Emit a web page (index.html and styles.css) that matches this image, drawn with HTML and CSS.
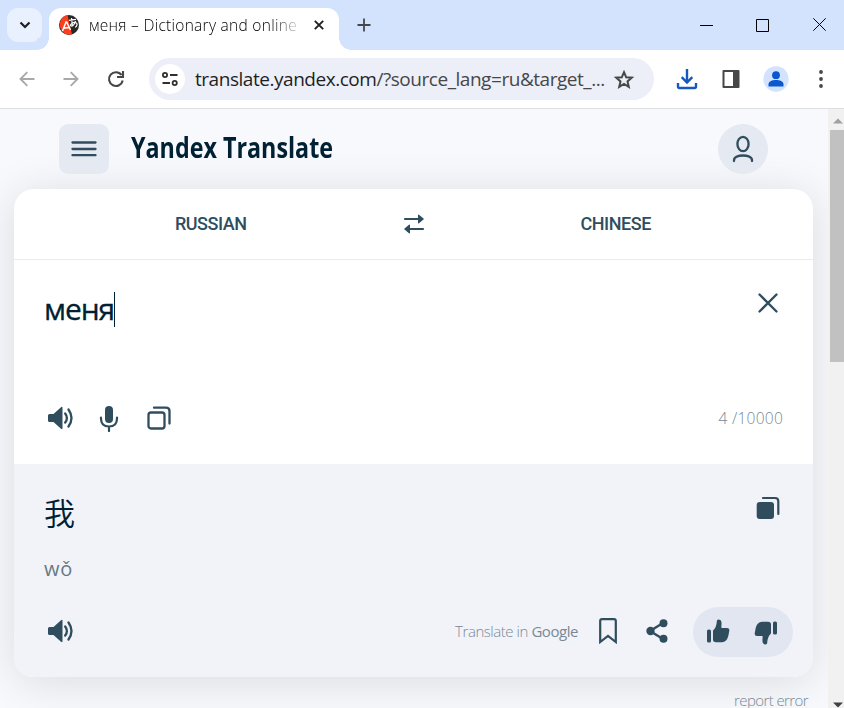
FILE: index.html
```html
<!DOCTYPE html>
<html lang="en">
<head>
<meta charset="utf-8">
<title>меня – Dictionary and online translation</title>
<link rel="stylesheet" href="styles.css">
</head>
<body>
<svg class="defs" width="0" height="0">
  <symbol id="speaker" viewBox="0 0 28 24">
    <path d="M2.500 8h4L14 1.200q1.500-1 1.500 .6v20.400q0 1.600-1.500 .6L6.500 16h-4Q1 16 1 14.500v-5Q1 8 2.500 8z" fill="currentColor"/>
    <path d="M18.200 7.500q3.400 4.500 0 9M21.500 3.500q6 8.500 0 17" fill="none" stroke="currentColor" stroke-width="2.300" stroke-linecap="round"/>
  </symbol>
</svg>
<div class="window">
  <header class="tabstrip">
    <button class="tab-search"><svg width="12" height="8" viewBox="0 0 12 8"><path d="M1.500 1.500 6 6l4.500-4.500" fill="none" stroke="#1f1f1f" stroke-width="2.200"/></svg></button>
    <div class="tab">
      <svg class="favicon" width="20" height="20" viewBox="0 0 20 20"><circle cx="10" cy="10" r="10" fill="#282828"/><path d="M8.500 0A10 10 0 1 0 13 19.500z" fill="#fc3f1d"/><path d="M3.500 16 7 7h.6l3.900 8M4.500 13.200l5.500-.7" fill="none" stroke="#fff" stroke-width="1.500"/><path d="M10 5.300l7-1M12.500 3l1 8.500M16.500 6c-.5 3-3 5.500-4.500 5s1-4 4-3.500 2.500 4 0 4.800" fill="none" stroke="#fff" stroke-width="1.200"/></svg>
      <span class="tab-title">меня – Dictionary and online</span>
      <svg width="10" height="10" viewBox="0 0 10 10"><path d="M.8.800l8.400 8.400M9.200.800.800 9.200" stroke="#1f1f1f" stroke-width="1.900"/></svg>
    </div>
    <svg class="new-tab" width="14" height="14" viewBox="0 0 14 14"><path d="M7 .5v13M.5 7h13" stroke="#474747" stroke-width="1.800"/></svg>
    <div class="controls">
      <svg width="13" height="13" viewBox="0 0 13 13"><path d="M0 6.500h13" stroke="#000"/></svg>
      <svg width="13" height="13" viewBox="0 0 13 13"><path d="M.5.500h12v12H.5z" fill="none" stroke="#000"/></svg>
      <svg width="13" height="13" viewBox="0 0 13 13"><path d="M.3.300l12.400 12.400M12.700.300.300 12.700" stroke="#000"/></svg>
    </div>
  </header>
  <nav class="toolbar">
    <svg class="back" width="16" height="16" viewBox="0 0 16 16"><path d="M15.500 8H1.800M8.300 1.200 1.500 8l6.800 6.800" fill="none" stroke="#a9a9a9" stroke-width="1.900"/></svg>
    <svg class="forward" width="16" height="16" viewBox="0 0 16 16"><path d="M.5 8h13.700M7.700 1.200 14.500 8l-6.800 6.800" fill="none" stroke="#a9a9a9" stroke-width="1.900"/></svg>
    <svg class="reload" width="18" height="18" viewBox="0 0 18 18"><path d="M15.700 10.500A6.900 6.900 0 1 1 14.500 5M16 1v6h-6" fill="none" stroke="#474747" stroke-width="2.100"/></svg>
    <div class="omnibox">
      <span class="site-info"><svg width="16" height="14" viewBox="0 0 16 14"><g fill="none" stroke="#303030" stroke-width="1.800"><circle cx="3" cy="3" r="2.100"/><path d="M8 3h7.500M.5 11H8"/><circle cx="12.700" cy="11" r="2.100"/></g></svg></span>
      <span class="url"><b>translate.yandex.com</b>/?source_lang=ru&amp;target_...</span>
      <svg class="star" width="20" height="19" viewBox="0 0 20 19"><path d="M10 2.200l2.200 5.100 5.500.4-4.200 3.700 1.300 5.500L10 14l-4.800 2.900 1.300-5.500-4.200-3.700 5.500-.4z" fill="none" stroke="#474747" stroke-width="2"/></svg>
    </div>
    <svg class="download" width="22" height="22" viewBox="0 0 22 22"><path d="M11 1v13M5.700 9.200l5.300 5.300 5.300-5.300M2 15v3.500Q2 20 3.500 20h15q1.500 0 1.500-1.500V15" fill="none" stroke="#1558c0" stroke-width="2.400"/></svg>
    <svg class="panel" width="18" height="18" viewBox="0 0 18 18"><path d="M1.500 1h15v16h-15z" fill="#fff" stroke="#474747" stroke-width="2" stroke-linejoin="round"/><path d="M11 1h5v16h-5z" fill="#474747"/></svg>
    <svg class="profile" width="26" height="26" viewBox="0 0 26 26"><circle cx="13" cy="13" r="12.700" fill="#d3e3fd"/><circle cx="13" cy="9.200" r="3.900" fill="#0b57d0"/><path d="M5.500 20.500v-2.300c0-5.600 15-5.600 15 0v2.300z" fill="#0b57d0"/></svg>
    <svg class="more" width="4" height="18" viewBox="0 0 4 18"><g fill="#474747"><circle cx="2" cy="2" r="1.900"/><circle cx="2" cy="9" r="1.900"/><circle cx="2" cy="16" r="1.900"/></g></svg>
  </nav>
  <div class="viewport">
    <main class="page">
      <div class="site-header">
        <button class="menu"><svg width="26" height="18" viewBox="0 0 26 18"><path d="M1.500 2.500h23M1.500 9h23M1.500 15.200h23" stroke="#304d5e" stroke-width="2.300" stroke-linecap="round"/></svg></button>
        <h1 class="logo">Yandex Translate</h1>
        <button class="account"><svg width="22" height="28" viewBox="0 0 22 28"><g fill="none" stroke="#304d5e" stroke-width="2.300" stroke-linecap="round"><ellipse cx="11" cy="9" rx="5.600" ry="7.200"/><path d="M2 26v-.8c0-6.300 18-6.300 18 0v.8"/></g></svg></button>
      </div>
      <section class="card">
        <div class="langs">
          <span class="lang russian"><span>RUSSIAN</span></span>
          <svg width="22" height="20" viewBox="0 0 22 20"><path d="M2 5h15M5 15h15" stroke="#304d5e" stroke-width="2.200" stroke-linecap="round"/><path d="M15 1.200q0-1 1-.4l4.500 3.600q.8.600 0 1.200L16 9.200q-1 .6-1-.4zM7 11.200q0-1-1-.4l-4.500 3.600q-.8.600 0 1.200L6 19.200q1 .6 1-.4z" fill="#304d5e"/></svg>
          <span class="lang chinese"><span>CHINESE</span></span>
        </div>
        <div class="source">
          <div class="line">
            <span class="source-text">меня</span><i class="caret"></i>
            <svg class="clear" width="20" height="20" viewBox="0 0 20 20"><path d="M1.500 1.500l17 17M18.500 1.500l-17 17" stroke="#304d5e" stroke-width="2.300" stroke-linecap="round"/></svg>
          </div>
          <div class="actions">
            <svg width="28" height="24"><use href="#speaker"/></svg>
            <svg class="mic" width="20" height="27" viewBox="0 0 20 27"><rect x="6" y="1" width="8" height="17" rx="4" fill="#304d5e"/><path d="M2 12.500v1q0 8 8 8t8-8v-1M10 22v4" fill="none" stroke="#304d5e" stroke-width="2.200" stroke-linecap="round"/></svg>
            <svg class="copy" width="24" height="24" viewBox="0 0 24 24"><g fill="none" stroke="#304d5e" stroke-width="2.300" stroke-linecap="round"><rect x="1.500" y="6.500" width="16" height="16" rx="2.500"/><path d="M7 1.700h12q3.500 0 3.500 3.500V17.500"/></g></svg>
            <span class="counter">4 /10000</span>
          </div>
        </div>
        <div class="target">
          <div class="line">
            <span class="target-text" lang="zh">我</span>
            <svg class="copy-filled" width="24" height="24" viewBox="0 0 24 24"><rect x=".7" y="6" width="17.300" height="17" rx="3" fill="#304d5e"/><path d="M7 2h12q3.300 0 3.300 3.300V18" fill="none" stroke="#304d5e" stroke-width="2.200" stroke-linecap="round"/></svg>
          </div>
          <div class="pinyin">wǒ</div>
          <div class="actions">
            <svg width="28" height="24"><use href="#speaker"/></svg>
            <span class="provider">Translate in <b>Google</b></span>
            <svg class="bookmark" width="18" height="26" viewBox="0 0 18 26"><path d="M1.200 24V3q0-1.800 1.800-1.800h12q1.800 0 1.800 1.800v21L9 18z" fill="none" stroke="#304d5e" stroke-width="2.200"/></svg>
            <svg class="share" width="22" height="24" viewBox="0 0 22 24"><path d="M17 4 4 12l13 8" fill="none" stroke="#304d5e" stroke-width="2.400"/><g fill="#304d5e"><circle cx="17.500" cy="4.300" r="4"/><circle cx="4.500" cy="12" r="4.200"/><circle cx="17.500" cy="19.800" r="4"/></g></svg>
            <div class="votes">
              <svg width="24" height="24" viewBox="0 0 24 24"><g id="thumb" fill="#304d5e"><rect x="1" y="10.500" width="4" height="13" rx="1.600"/><path d="M7 11.500q3.500-3 3.800-9.300Q10.900.5 12.300.5c3.500 0 3.600 3.500 3 7.500q-.2 1 .8 1H21q2.600 0 2.300 2.800l-1 5.200q-1.500 6-6.300 6.200H10q-3 0-3-2.700z"/></g></svg>
              <svg class="dislike" width="24" height="24" viewBox="0 0 24 24"><use href="#thumb" transform="rotate(180 12 12)"/></svg>
            </div>
          </div>
        </div>
      </section>
      <div class="report"><span>report error</span></div>
    </main>
    <aside class="scrollbar">
      <svg width="10" height="6" viewBox="0 0 10 6"><path d="M0 5.500 5 .5l5 5z" fill="#a0a0a0"/></svg>
      <div class="thumb"></div>
      <svg class="down" width="10" height="6" viewBox="0 0 10 6"><path d="M0 .5l5 5 5-5z" fill="#404040"/></svg>
    </aside>
  </div>
</div>
</body>
</html>
```
FILE: styles.css
```css
* { box-sizing: border-box; }
body { margin: 0; font-family: "Open Sans", "Noto Sans", sans-serif; color: #304d5e; }
button { border: 0; padding: 0; display: flex; align-items: center; justify-content: center; }
svg { display: block; flex: none; }
.defs { position: absolute; }
.window { width: 844px; height: 708px; overflow: hidden; background: #fff; display: flex; flex-direction: column; }
span { white-space: nowrap; }

.tabstrip { height: 50px; flex: none; background: #d3e2fd; display: flex; align-items: center; padding-left: 7px; }
.tab-search { width: 35px; height: 34px; border-radius: 11px; background: #e9f0fe; }
.tab { position: relative; align-self: flex-end; width: 290px; height: 42px; margin-left: 7px; padding: 0 0 8px 10px; background: #fff; border-radius: 12px 12px 0 0; display: flex; align-items: center; }
.tab::before, .tab::after { content: ""; position: absolute; bottom: 0; width: 12px; height: 12px; }
.tab::before { left: -12px; background: radial-gradient(circle at 0 0, #d3e2fd 11.5px, #fff 12px); }
.tab::after { right: -12px; background: radial-gradient(circle at 100% 0, #d3e2fd 11.5px, #fff 12px); }
.tab-title { width: 209px; margin: 0 16px 0 10px; overflow: hidden; font-size: 15.5px; line-height: 24px; font-weight: 330; letter-spacing: .28px; color: #000; -webkit-mask-image: linear-gradient(90deg, #000 182px, transparent 215px); mask-image: linear-gradient(90deg, #000 182px, transparent 215px); }
.new-tab { margin-left: 18px; }
.controls { margin-left: auto; margin-right: 19px; display: flex; gap: 43px; }
.controls svg:last-child { margin: -1px -1px 0 1px; }

.toolbar { height: 59px; flex: none; border-bottom: 1px solid #dedfe0; display: flex; align-items: center; padding-left: 19px; }
.forward { margin-left: 28px; }
.reload { margin-left: 28px; }
.omnibox { width: 505px; height: 42px; margin-left: 24px; border-radius: 21px; background: #eceef8; display: flex; align-items: center; padding: 0 20px 0 6px; }
.site-info { flex: none; width: 30px; height: 30px; border-radius: 50%; background: #fff; display: flex; align-items: center; justify-content: center; }
.url { margin-left: 10px; font-size: 19px; letter-spacing: -.46px; color: #474747; }
.url b { font-weight: 400; color: #1f1f1f; }
.star { margin-left: auto; }
.download { margin-left: 22px; }
.panel { margin-left: 24px; }
.profile { margin-left: 23px; }
.more { margin-left: 30px; }

.viewport { flex: 1; min-height: 0; display: flex; }
.page { width: 828px; overflow: hidden; background: #f7f9fd; }
.site-header { height: 80px; padding: 0 60px 0 59px; display: flex; align-items: center; }
.menu { width: 50px; height: 50px; border-radius: 9px; background: #e5e9f2; }
.logo { margin: -5px auto 0 22px; font-size: 28px; line-height: 40px; font-weight: 700; color: #002033; white-space: nowrap; transform: scaleX(.832); transform-origin: left; }
.account { width: 50px; height: 50px; border-radius: 50%; background: #e4e9f2; }
.card { width: 799px; height: 488px; margin-left: 14px; border-radius: 20px; background: #fff; box-shadow: 0 5px 45px rgba(0, 0, 0, .12); }
.langs { height: 71px; border-bottom: 1px solid #ebebed; display: flex; align-items: center; }
.lang { width: 389px; padding-bottom: 2px; display: flex; justify-content: center; font-family: Roboto, sans-serif; font-size: 18px; font-weight: 500; letter-spacing: -.45px; }
.russian { padding-left: 5px; }
.chinese { padding-right: 6px; }
.source { height: 204px; padding: 28px 30px 0; }
.line { display: flex; align-items: flex-start; }
.source-text { font-size: 30px; line-height: 42px; letter-spacing: -1.1px; -webkit-text-stroke: .3px #002033; color: #002033; }
.caret { width: 1px; height: 35px; margin-top: 4px; background: #002033; }
.clear { margin: 5px 5px 0 auto; }
.actions { display: flex; align-items: center; padding-left: 2.5px; }
.source .actions { height: 28px; margin-top: 74px; }
.mic { margin-left: 24.5px; }
.copy { margin-left: 28px; }
.counter { margin-left: auto; font-size: 15.5px; font-weight: 300; letter-spacing: .25px; color: #788995; }
.target { height: 213px; padding: 32px 20px 0 30px; background: #f2f3f9; border-radius: 0 0 20px 20px; }
.target-text { margin-top: -2px; height: 38px; font: 350 31px/36px "Noto Sans CJK SC", sans-serif; color: #002033; }
.copy-filled { margin: 0 13px 0 auto; }
.pinyin { margin-top: 22px; height: 30px; line-height: 30px; font-size: 20px; letter-spacing: .8px; color: #667985; }
.target .actions { height: 50px; margin-top: 23px; }
.target .actions > svg { margin-top: -2px; }
.provider { margin: -2px 0 0 auto; font-size: 15px; font-weight: 300; letter-spacing: -.45px; color: #788995; }
.provider b { font-weight: 400; }
.bookmark { margin-left: 21px; }
.share { margin-left: 29px; }
.votes { width: 100px; height: 50px; margin-left: 25px; padding-right: 2px; border-radius: 25px; background: #e1e6f1; display: flex; align-items: center; justify-content: center; gap: 24px; }
.votes svg { margin-top: -3px; }
.votes .dislike { margin-top: 2px; }
.report { display: flex; justify-content: flex-end; padding: 15px 20px 0 0; font-size: 15px; line-height: 16px; font-weight: 300; letter-spacing: -.6px; color: #788995; }

.scrollbar { width: 16px; background: #f1f1f1; display: flex; flex-direction: column; align-items: flex-end; padding-top: 9px; }
.scrollbar svg { margin-right: 1px; }
.thumb { width: 14px; height: 232px; margin-top: 6px; background: #c1c1c1; }
.scrollbar .down { margin-top: auto; margin-bottom: 0; }
```
